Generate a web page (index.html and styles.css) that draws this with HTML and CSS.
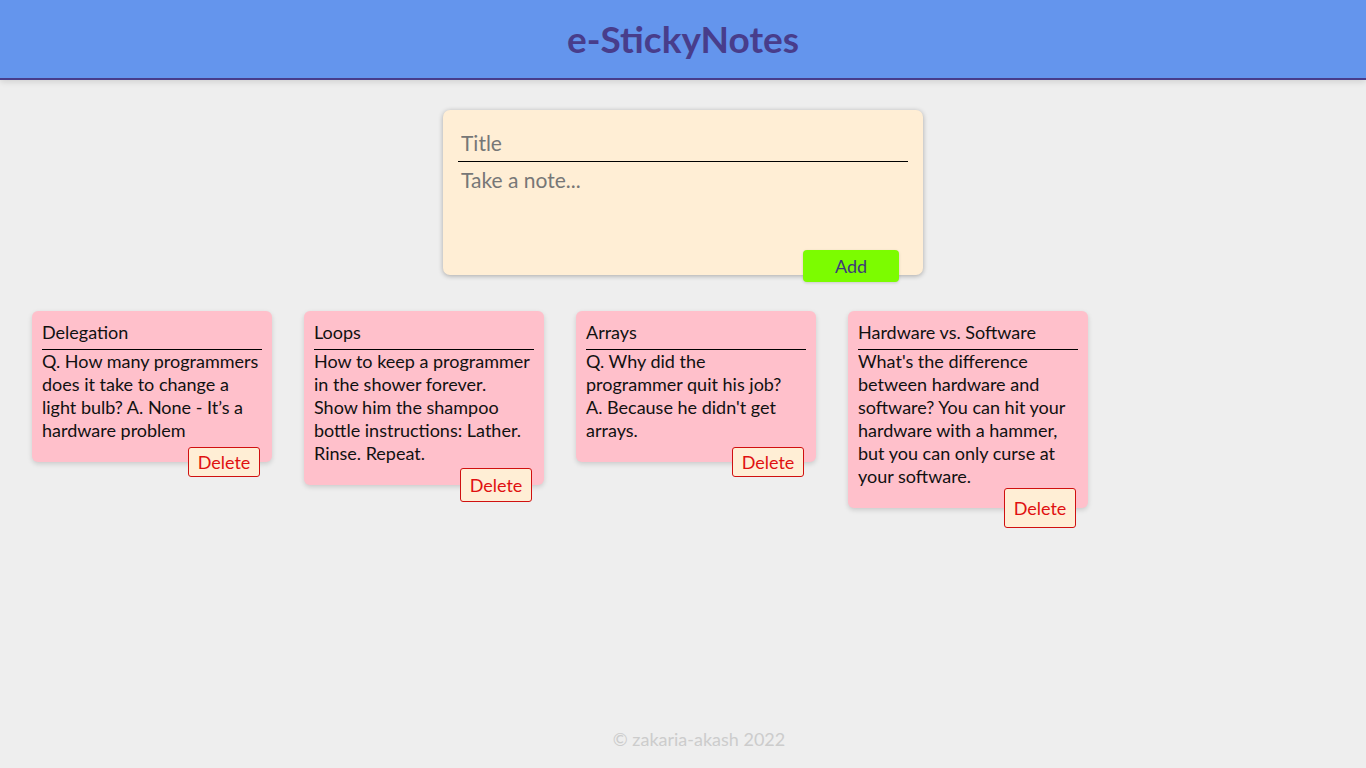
FILE: index.html
```html
<!DOCTYPE html>
<html lang="en">
<head>
<meta charset="utf-8">
<title>e-StickyNotes</title>
<link rel="stylesheet" href="styles.css">
</head>
<body>
<header class="app-header">
  <h1 class="app-title">e-StickyNotes</h1>
</header>
<main class="app-main">
  <form class="note-form">
    <input class="note-form__title" type="text" placeholder="Title">
    <textarea class="note-form__body" placeholder="Take a note..."></textarea>
    <button class="note-form__add" type="button">Add</button>
  </form>
  <section class="notes">
    <article class="note">
      <h2 class="note__title">Delegation</h2>
      <p class="note__text">Q. How many programmers does it take to change a light bulb? A. None - It’s a hardware problem</p>
      <button class="note__delete" type="button">Delete</button>
    </article>
    <article class="note">
      <h2 class="note__title">Loops</h2>
      <p class="note__text">How to keep a programmer in the shower forever. Show him the shampoo bottle instructions: Lather. Rinse. Repeat.</p>
      <button class="note__delete" type="button">Delete</button>
    </article>
    <article class="note">
      <h2 class="note__title">Arrays</h2>
      <p class="note__text">Q. Why did the programmer quit his job?<br>A. Because he didn't get arrays.</p>
      <button class="note__delete" type="button">Delete</button>
    </article>
    <article class="note">
      <h2 class="note__title">Hardware vs. Software</h2>
      <p class="note__text">What's the difference between hardware and software? You can hit your hardware with a hammer, but you can only curse at your software.</p>
      <button class="note__delete" type="button">Delete</button>
    </article>
  </section>
</main>
<footer class="app-footer">© zakaria-akash 2022</footer>
</body>
</html>
```
FILE: styles.css
```css
* { box-sizing: border-box; }

html, body { margin: 0; padding: 0; }

body {
  min-height: 100vh;
  display: flex;
  flex-direction: column;
  background: #eeeeee;
  font-family: "Lato", "Noto Sans", sans-serif;
  color: #111;
}

.app-header {
  height: 80px;
  background: #6495ed;
  border-bottom: 2px solid #483d8b;
  box-shadow: 0 2px 6px rgba(0, 0, 0, 0.12);
  display: flex;
  align-items: center;
  justify-content: center;
}

.app-title {
  margin: 0;
  font-size: 37px;
  font-weight: 700;
  color: #483d8b;
  line-height: 1;
  padding-bottom: 2px;
}

.app-main {
  display: flex;
  flex-direction: column;
}

.note-form {
  position: relative;
  width: 480px;
  height: 165px;
  margin: 30px auto 0;
  padding: 15px;
  background: #ffeed5;
  border-radius: 7px;
  box-shadow: 0 1px 5px rgba(0, 0, 0, 0.3);
  display: flex;
  flex-direction: column;
}

.note-form__title {
  width: 100%;
  height: 37px;
  border: none;
  border-bottom: 1px solid #000;
  background: transparent;
  padding: 7px 3px 9px;
  font-family: inherit;
  font-size: 21px;
  line-height: 20px;
  outline: none;
}

.note-form__body {
  width: 100%;
  height: 98px;
  border: none;
  background: transparent;
  resize: none;
  padding: 6px 3px 0;
  font-family: inherit;
  font-size: 21px;
  line-height: 24px;
  outline: none;
}

.note-form__title::placeholder,
.note-form__body::placeholder {
  color: #777;
}

.note-form__add {
  position: absolute;
  right: 24px;
  bottom: -7px;
  width: 96px;
  height: 32px;
  border: none;
  border-radius: 4px;
  background: #7cfc00;
  color: #3d3a7a;
  font-family: inherit;
  font-size: 18px;
  box-shadow: 0 1px 3px rgba(0, 0, 0, 0.15);
}

.notes {
  display: flex;
  flex-wrap: wrap;
  align-items: flex-start;
  gap: 32px;
  padding: 0 32px;
  margin-top: 36px;
}

.note {
  position: relative;
  width: 240px;
  padding: 10px 10px 10px;
  background: #ffc0cb;
  border-radius: 6px;
  box-shadow: 0 2px 5px rgba(0, 0, 0, 0.15);
}

.note__title {
  margin: 0;
  padding-bottom: 5px;
  border-bottom: 1px solid #000;
  font-size: 18px;
  font-weight: 400;
  line-height: 23px;
}

.note__text {
  margin: 0 0 10px;
  font-size: 18px;
  line-height: 23px;
}

.note__delete {
  position: absolute;
  right: 12px;
  bottom: -10%;
  width: 72px;
  height: 20%;
  border: 1px solid #d01010;
  border-radius: 3px;
  background: #ffeed5;
  color: #e01010;
  font-family: inherit;
  font-size: 18px;
  padding: 0;
}

.app-footer {
  margin-top: auto;
  padding: 0 0 19px 32px;
  text-align: center;
  font-size: 18px;
  line-height: 20px;
  color: #cccccc;
}
```
